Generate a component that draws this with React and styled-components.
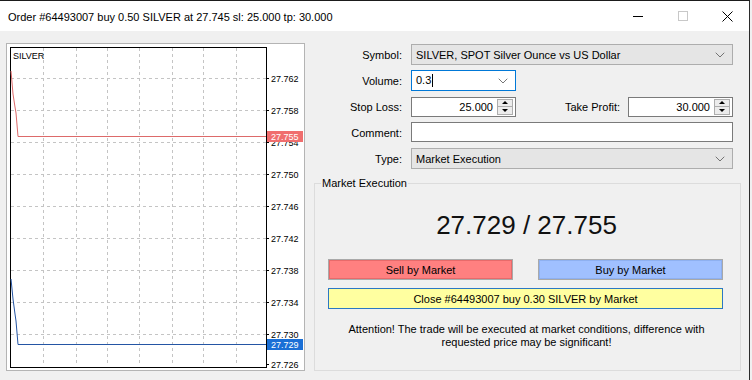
import React from "react";
import styled, { createGlobalStyle } from "styled-components";
import { ChevronDown } from "lucide-react";

const GlobalStyle = createGlobalStyle`
  html, body {
    margin: 0;
    padding: 0;
    background: #f0f0f0;
  }
  body {
    font-family: "Liberation Sans", Arial, sans-serif;
    font-size: 11px;
    color: #000;
  }
  * {
    box-sizing: border-box;
  }
`;

const Window = styled.div`
  width: 750px;
  height: 380px;
  background: #f0f0f0;
  border-top: 1px solid #1b1b1b;
  border-right: 1px solid #2b2b2b;
  display: flex;
  flex-direction: column;
  overflow: hidden;
`;

const TitleBar = styled.div`
  height: 30px;
  background: #fff;
  display: flex;
  align-items: center;
  padding-left: 8px;
  flex-shrink: 0;
`;

const TitleText = styled.div`
  flex: 1;
  font-size: 11px;
  padding-top: 1px;
`;

const Control = styled.div`
  width: ${(p) => p.w}px;
  height: 30px;
  display: flex;
  align-items: center;
  justify-content: center;
`;

const Body = styled.div`
  flex: 1;
  display: flex;
  padding: 12px 0 0 6px;
`;

const ChartPanel = styled.div`
  width: 299px;
  height: 328px;
  background: #fff;
  border: 1px solid #b4b4b4;
  flex-shrink: 0;
`;

const Side = styled.div`
  flex: 1;
  display: flex;
  flex-direction: column;
`;

const Form = styled.div`
  display: grid;
  grid-template-columns: 97px 322px;
  grid-auto-rows: 21px;
  column-gap: 9px;
  row-gap: 5px;
  margin-top: 1px;
`;

const Label = styled.div`
  text-align: right;
  align-self: center;
  white-space: nowrap;
`;

const Select = styled.div`
  display: flex;
  align-items: center;
  justify-content: space-between;
  width: ${(p) => p.w || 322}px;
  height: 21px;
  padding: 0 4px 0 4px;
  background: ${(p) => (p.focus ? "#fff" : "#e5e5e5")};
  border: 1px solid ${(p) => (p.focus ? "#0078d7" : "#adadad")};
  color: #000;
`;

const Caret = styled.span`
  display: inline-block;
  width: 1px;
  height: 13px;
  background: #000;
  margin-left: 1px;
  vertical-align: middle;
`;

const TextBox = styled.div`
  height: 20px;
  width: ${(p) => (p.w ? p.w + "px" : "100%")};
  background: #fff;
  border: 1px solid #7a7a7a;
  display: flex;
  align-items: center;
  justify-content: flex-end;
  padding-right: 2px;
`;

const SpinValue = styled.span`
  padding-right: 4px;
`;

const Spinner = styled.div`
  width: 16px;
  height: 16px;
  border: 1px solid #adadad;
  background: #ececec;
  display: flex;
  flex-direction: column;
`;

const SpinHalf = styled.div`
  flex: 1;
  display: flex;
  align-items: center;
  justify-content: center;
  border-top: ${(p) => (p.down ? "1px solid #adadad" : "none")};
  &::after {
    content: "";
    border-left: 3px solid transparent;
    border-right: 3px solid transparent;
    ${(p) =>
      p.down ? "border-top: 3px solid #000;" : "border-bottom: 3px solid #000;"}
  }
`;

const StopRow = styled.div`
  display: flex;
  align-items: center;
`;

const InlineLabel = styled.div`
  margin-left: auto;
  margin-right: 8px;
`;

const Group = styled.fieldset`
  margin: 8px 8px 9px 9px;
  flex: 1;
  border: 1px solid #dcdcdc;
  padding: 0;
  min-width: 0;
`;

const Legend = styled.legend`
  margin-left: 6px;
  padding: 0 1px;
  font-size: 11px;
  line-height: 13px;
`;

const GroupContent = styled.div`
  display: flex;
  flex-direction: column;
  padding-left: 13px;
`;

const Price = styled.div`
  margin-top: 20px;
  width: 397px;
  text-align: center;
  font-size: 26px;
  line-height: 30px;
  color: #111;
`;

const ButtonRow = styled.div`
  display: flex;
  justify-content: space-between;
  width: 395px;
  margin-top: 19px;
`;

const TradeButton = styled.div`
  width: ${(p) => p.w}px;
  height: 21px;
  display: flex;
  align-items: center;
  justify-content: center;
  background: ${(p) => p.bg};
  border: 1px solid ${(p) => p.edge};
  box-shadow: inset 0 0 0 1px ${(p) => p.inner};
  margin-top: ${(p) => p.mt || 0}px;
`;

const Attention = styled.div`
  margin-top: 14px;
  width: 397px;
  text-align: center;
  line-height: 13px;
`;

const xs = [36, 69, 100, 132, 165, 196, 229];
const ys = [34, 66, 98, 130, 162, 194, 226, 258, 290];
const labels = [
  ["27.762", 34],
  ["27.758", 66],
  ["27.754", 98],
  ["27.750", 130],
  ["27.746", 162],
  ["27.742", 194],
  ["27.738", 226],
  ["27.734", 258],
  ["27.730", 290],
  ["27.726", 320],
];

function Chart() {
  return (
    <svg width="297" height="326" style={{ display: "block" }}>
      {xs.map((x) => (
        <line key={"v" + x} x1={x + 0.5} y1={4} x2={x + 0.5} y2={322} stroke="#c4c4c4" strokeDasharray="3,3" />
      ))}
      {ys.map((y) => (
        <line key={"h" + y} x1={4} y1={y + 0.5} x2={259} y2={y + 0.5} stroke="#c4c4c4" strokeDasharray="3,3" />
      ))}
      {labels.map(([t, y]) => (
        <g key={t}>
          <line x1={259} y1={y + 0.5} x2={262} y2={y + 0.5} stroke="#000" />
          <text x={264} y={y + 3.5} fontSize="9" fontFamily="Liberation Sans, Arial, sans-serif" fill="#000">
            {t}
          </text>
        </g>
      ))}
      <rect x="3.5" y="3.5" width="256" height="320" fill="none" stroke="#000" />
      <text x="6" y="15" fontSize="9" fontFamily="Liberation Sans, Arial, sans-serif" fill="#000">
        SILVER
      </text>
      <polyline
        points="4,27 6,50 8,63 9,69 11,92.5 259,92.5"
        fill="none"
        stroke="#dd6a6a"
        strokeWidth="1"
      />
      <polyline
        points="4,235 6,255 8,270 9,277 11,300.5 259,300.5"
        fill="none"
        stroke="#2455a4"
        strokeWidth="1"
      />
      <rect x="260" y="87" width="36" height="11" fill="#f06e6e" />
      <text x="264" y="96" fontSize="9" fontFamily="Liberation Sans, Arial, sans-serif" fill="#fff">
        27.755
      </text>
      <rect x="260" y="295" width="36" height="11" fill="#1a6fd6" />
      <text x="264" y="304" fontSize="9" fontFamily="Liberation Sans, Arial, sans-serif" fill="#fff">
        27.729
      </text>
    </svg>
  );
}

function SpinField({ value }) {
  return (
    <TextBox w={105}>
      <SpinValue>{value}</SpinValue>
      <Spinner>
        <SpinHalf />
        <SpinHalf down />
      </Spinner>
    </TextBox>
  );
}

export default function App() {
  return (
    <>
      <GlobalStyle />
      <Window>
        <TitleBar>
          <TitleText>Order #64493007 buy 0.50 SILVER at 27.745 sl: 25.000 tp: 30.000</TitleText>
          <Control w={44}>
            <svg width="10" height="10">
              <line x1="0" y1="5.5" x2="10" y2="5.5" stroke="#000" />
            </svg>
          </Control>
          <Control w={45}>
            <svg width="10" height="10">
              <rect x="0.5" y="0.5" width="9" height="9" fill="none" stroke="#c8c8c8" />
            </svg>
          </Control>
          <Control w={44}>
            <svg width="11" height="11">
              <path d="M0.5 0.5 L10.5 10.5 M10.5 0.5 L0.5 10.5" stroke="#000" strokeWidth="1" />
            </svg>
          </Control>
        </TitleBar>
        <Body>
          <ChartPanel>
            <Chart />
          </ChartPanel>
          <Side>
            <Form>
              <Label>Symbol:</Label>
              <Select>
                <span>SILVER, SPOT Silver Ounce vs US Dollar</span>
                <ChevronDown size={16} strokeWidth={1.3} color="#606060" />
              </Select>
              <Label>Volume:</Label>
              <Select w={105} focus>
                <span>
                  0.3
                  <Caret />
                </span>
                <ChevronDown size={16} strokeWidth={1.3} color="#606060" />
              </Select>
              <Label>Stop Loss:</Label>
              <StopRow>
                <SpinField value="25.000" />
                <InlineLabel>Take Profit:</InlineLabel>
                <SpinField value="30.000" />
              </StopRow>
              <Label>Comment:</Label>
              <TextBox />
              <Label>Type:</Label>
              <Select>
                <span>Market Execution</span>
                <ChevronDown size={16} strokeWidth={1.3} color="#606060" />
              </Select>
            </Form>
            <Group>
              <Legend>Market Execution</Legend>
              <GroupContent>
                <Price>27.729 / 27.755</Price>
                <ButtonRow>
                  <TradeButton w={185} bg="#ff8080" edge="#a9a9a9" inner="#e86a6a">
                    Sell by Market
                  </TradeButton>
                  <TradeButton w={185} bg="#a0c0ff" edge="#a9a9a9" inner="#8eb0f0">
                    Buy by Market
                  </TradeButton>
                </ButtonRow>
                <TradeButton w={395} mt={8} bg="#ffffa0" edge="#2b78c4" inner="#ffffa0">
                  Close #64493007 buy 0.30 SILVER by Market
                </TradeButton>
                <Attention>
                  Attention! The trade will be executed at market conditions, difference with
                  <br />
                  requested price may be significant!
                </Attention>
              </GroupContent>
            </Group>
          </Side>
        </Body>
      </Window>
    </>
  );
}
